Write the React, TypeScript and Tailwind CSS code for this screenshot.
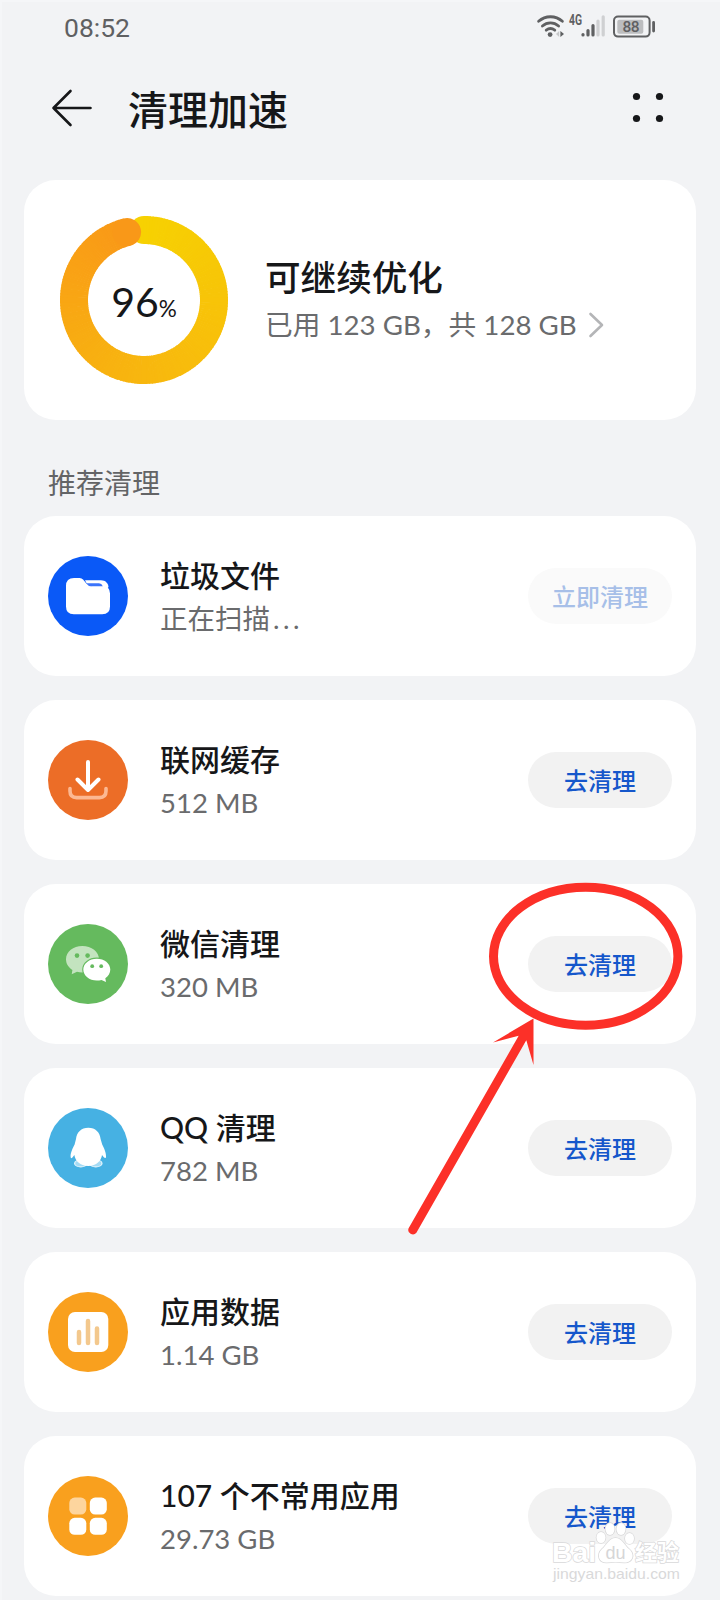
import React from "react";

interface CleanItem {
    title: string;
    detail: string;
    pending?: boolean;
    action: string;
    disabled?: boolean;
    background: string;
    icon: React.ReactNode;
}

const RING_START = [247, 209, 2];
const RING_MIDDLE = [248, 184, 14];
const RING_END = [249, 152, 24];

const FolderIcon = () => (
    <svg viewBox="0 0 80 80" className="w-20 h-20">
        <path
            d="M37 24.2H53C57.5 24.2 60 27 60.5 31L58 34L40 30Z"
            fill="#fff"
        />
        <path
            d="M26 22H31.5Q33.8 22 35.3 23.7L38.3 27.6Q40.2 30.2 43 30.2H54.5Q62 30.2 62 37.5V50.5Q62 58.3 54.2 58.3H25.8Q18 58.3 18 50.5V30Q18 22 26 22Z"
            fill="#fff"
        />
        <path
            d="M38.2 27.2H51Q53.6 27.2 54.8 30.2H43Q40.2 30.2 38.2 27.2Z"
            fill="#3b74fb"
        />
    </svg>
);

const DownloadIcon = () => (
    <svg
        viewBox="0 0 80 80"
        className="w-20 h-20"
        fill="none"
        strokeLinecap="round"
        strokeLinejoin="round">
        <path
            d="M22 48.5V51Q22 57.6 28.6 57.6H51.4Q58 57.6 58 51V48.5"
            stroke="#fcb892"
            strokeWidth="3.6"
        />
        <path
            d="M40 22V50M29.5 39.5L40 50L50.5 39.5"
            stroke="#fff"
            strokeWidth="4"
        />
    </svg>
);

const WechatIcon = () => (
    <svg viewBox="0 0 80 80" className="w-20 h-20">
        <path
            d="M34.3 22C43.5 22 51 27.9 51 35.3S43.5 48.6 34.3 48.6C32.4 48.6 30.6 48.3 29 47.8L23.7 50.3L24.4 45.9C20.4 43.5 18 39.7 18 35.3C18 27.9 25.2 22 34.3 22Z"
            fill="#c3e4bf"
        />
        <path
            d="M48.8 34.7C56.3 34.7 62.3 39.4 62.3 45.6C62.3 49.2 60.3 52.4 57.3 54.3L58 58L53.5 56C52 56.4 50.5 56.6 48.8 56.6C41.3 56.6 35.3 51.7 35.3 45.6S41.3 34.7 48.8 34.7Z"
            fill="#fff"
            stroke="#65ba5e"
            strokeWidth="2.2"
            paintOrder="stroke"
        />
        <g fill="#65ba5e">
            <circle cx="29" cy="31.6" r="2.3" />
            <circle cx="39.6" cy="31.6" r="2.3" />
            <circle cx="44.2" cy="42.2" r="1.9" />
            <circle cx="53.2" cy="42.2" r="1.9" />
        </g>
    </svg>
);

const QQIcon = () => (
    <svg viewBox="0 0 80 80" className="w-20 h-20">
        <g fill="#a5dbf4" stroke="#e9f7fd" strokeWidth="1.2">
            <ellipse cx="32.8" cy="55.4" rx="6.2" ry="3.4" />
            <ellipse cx="47.8" cy="55.4" rx="6.2" ry="3.4" />
        </g>
        <path
            d="M40.3 19.7C47.5 19.7 52 24.5 52.6 31L54.2 36.5C56.2 40 58.3 45.5 58 48.5C57.9 50.6 57 50.6 55.2 48.6L54 47C53.4 52.5 48.5 58 40.3 58S27 52.5 26.4 47L25.2 48.6C23.6 50.7 22.7 50.6 22.6 48.5C22.4 45.5 24.6 40 26.6 36.5L28 31C28.6 24.5 33.2 19.7 40.3 19.7Z"
            fill="#fff"
        />
    </svg>
);

const ChartIcon = () => (
    <svg viewBox="0 0 80 80" className="w-20 h-20">
        <rect x="20" y="20" width="40.3" height="40" rx="7" fill="#fff" />
        <path
            d="M31 40V51M40 29V51M49 36.5V51"
            stroke="#f3c88d"
            strokeWidth="4.5"
            strokeLinecap="round"
        />
    </svg>
);

const AppsIcon = () => (
    <svg viewBox="0 0 80 80" className="w-20 h-20" fill="#fff">
        <rect x="21.3" y="21.6" width="17" height="17" rx="5.4" fill="#fdd59e" />
        <rect x="41.8" y="21.6" width="17" height="17" rx="5.4" />
        <rect x="21.3" y="41.8" width="17" height="17" rx="5.4" />
        <rect x="41.8" y="41.8" width="17" height="17" rx="5.4" />
    </svg>
);

const items: CleanItem[] = [
    {
        title: "垃圾文件",
        detail: "正在扫描",
        pending: true,
        action: "立即清理",
        disabled: true,
        background: "bg-[#0a59f7]",
        icon: <FolderIcon />
    },
    {
        title: "联网缓存",
        detail: "512 MB",
        action: "去清理",
        background: "bg-[#ec6d27]",
        icon: <DownloadIcon />
    },
    {
        title: "微信清理",
        detail: "320 MB",
        action: "去清理",
        background: "bg-[#65ba5e]",
        icon: <WechatIcon />
    },
    {
        title: "QQ 清理",
        detail: "782 MB",
        action: "去清理",
        background: "bg-[#46b1e3]",
        icon: <QQIcon />
    },
    {
        title: "应用数据",
        detail: "1.14 GB",
        action: "去清理",
        background: "bg-[#f9a01e]",
        icon: <ChartIcon />
    },
    {
        title: "107 个不常用应用",
        detail: "29.73 GB",
        action: "去清理",
        background: "bg-[#f9a01e]",
        icon: <AppsIcon />
    }
];

const StatusBar = () => (
    <div className="h-[54px] px-16 flex items-center justify-between text-[#5f6062]">
        <span className="pt-0.5 font-['Roboto',sans-serif] text-[26.5px] leading-8">
            08:52
        </span>
        <svg
            viewBox="0 0 120 34"
            className="w-[120px] h-[34px] overflow-visible">
            <g transform="translate(0 4)">
                <g
                    fill="none"
                    stroke="currentColor"
                    strokeWidth="2.8"
                    strokeLinecap="round">
                    <path d="M2.6 7.3C9.5 1.2 19.5 1.2 26.4 7.3" />
                    <path d="M6.4 12C11.2 7.9 17.8 7.9 22.6 12" />
                    <path d="M10.2 16.2C12.8 14.2 16.2 14.2 18.8 16.2" />
                </g>
                <circle cx="14.1" cy="20.6" r="2.4" fill="currentColor" />
                <path d="M23.2 17V23L20 20Z" fill="#c6c7c9" />
                <path d="M24.4 17V23L28 20Z" fill="currentColor" />
                <text
                    x="33"
                    y="11"
                    fill="currentColor"
                    textLength="13"
                    lengthAdjust="spacingAndGlyphs"
                    className="font-['Roboto',sans-serif] font-bold text-[14px]">
                    4G
                </text>
                <g strokeWidth="3.2" strokeLinecap="round">
                    <path
                        d="M47 20.6V21M52 16.5V21M57 11.5V21"
                        stroke="currentColor"
                    />
                    <path d="M62 7V21M67.2 2.8V21" stroke="#cfd0d2" />
                </g>
                <rect
                    x="78"
                    y="2.6"
                    width="35.6"
                    height="20"
                    rx="4"
                    fill="none"
                    stroke="currentColor"
                    strokeWidth="2"
                />
                <rect
                    x="81.3"
                    y="5.8"
                    width="26"
                    height="14"
                    rx="2"
                    fill="#bcbdbf"
                />
                <path
                    d="M117.6 8.5V17"
                    stroke="currentColor"
                    strokeWidth="2.8"
                    strokeLinecap="round"
                />
                <text
                    x="86.5"
                    y="18.4"
                    fill="currentColor"
                    textLength="17"
                    className="font-['Roboto',sans-serif] font-medium text-[15.5px]">
                    88
                </text>
            </g>
        </svg>
    </div>
);

const Header = () => (
    <header className="h-[126px] pl-[50px] pr-[54px] flex items-start text-[#161719]">
        <svg viewBox="0 0 44 44" className="w-11 h-11 mt-8" fill="none">
            <path
                d="M20.5 5L3.5 22L20.5 39M3.5 22H40.5"
                stroke="currentColor"
                strokeWidth="2.6"
                strokeLinecap="round"
                strokeLinejoin="round"
            />
        </svg>
        <h1 className="ml-[34px] mt-[27px] text-[40px] leading-[58px] font-medium">
            清理加速
        </h1>
        <svg
            viewBox="0 0 36 36"
            className="ml-auto mt-[35px] w-9 h-9"
            fill="currentColor">
            <circle cx="6.5" cy="7.5" r="3.6" />
            <circle cx="29.5" cy="7.5" r="3.6" />
            <circle cx="6.5" cy="29.5" r="3.6" />
            <circle cx="29.5" cy="29.5" r="3.6" />
        </svg>
    </header>
);

const ringPoint = (degrees: number) => {
    const angle = (degrees * Math.PI) / 180;
    return `${84 + 70 * Math.sin(angle)} ${84 - 70 * Math.cos(angle)}`;
};

const ringColor = (degrees: number) => {
    const t = degrees / 346;
    const [from, to] =
        t < 0.5 ? [RING_START, RING_MIDDLE] : [RING_MIDDLE, RING_END];
    const k = t < 0.5 ? t * 2 : t * 2 - 1;
    return `rgb(${from.map((c, i) => Math.round(c + (to[i] - c) * k)).join(",")})`;
};

const UsageRing = () => {
    const steps = Array.from({length: 173}, (_, i) => i * 2);
    return (
        <div className="grid place-items-center w-[168px] h-[168px]">
            <svg
                viewBox="0 0 168 168"
                className="col-start-1 row-start-1 w-[168px] h-[168px]"
                fill="none"
                strokeWidth="28">
                <circle cx="84" cy="14" r="14" fill={ringColor(0)} strokeWidth="0" />
                {steps.map((d) => (
                    <path
                        key={d}
                        d={`M${ringPoint(d)}A70 70 0 0 1 ${ringPoint(Math.min(d + 2.6, 346))}`}
                        stroke={ringColor(d)}
                    />
                ))}
                <path
                    d={`M${ringPoint(345.5)}L${ringPoint(346)}`}
                    stroke={ringColor(346)}
                    strokeLinecap="round"
                />
            </svg>
            <div className="col-start-1 row-start-1 pt-0.5 flex items-baseline text-[#161719] font-['Lato',sans-serif] leading-none">
                <span className="text-[41px]">96</span>
                <span className="text-[22.5px]">%</span>
            </div>
        </div>
    );
};

const UsageCard = () => (
    <section className="h-60 pl-9 rounded-[32px] bg-white flex items-center">
        <UsageRing />
        <div className="ml-[37px] -mt-0.5 flex flex-col">
            <div className="text-[35.6px] leading-[52px] font-medium text-[#161719]">
                可继续优化
            </div>
            <div className="flex items-center gap-[11px] text-[27.7px] leading-[42px] text-[#6a6b6d]">
                <span className="whitespace-nowrap">已用 123 GB，共 128 GB</span>
                <svg viewBox="0 0 16 28" className="w-4 h-7" fill="none">
                    <path
                        d="M2.5 3L14 14L2.5 25"
                        stroke="#b4b5b7"
                        strokeWidth="2.6"
                        strokeLinecap="round"
                        strokeLinejoin="round"
                    />
                </svg>
            </div>
        </div>
    </section>
);

const CleanCard = ({
    title,
    detail,
    pending = false,
    action,
    disabled = false,
    background,
    icon
}: CleanItem) => (
    <li className="h-40 px-6 rounded-[32px] bg-white flex items-center">
        <div className={`w-20 h-20 rounded-full shrink-0 ${background}`}>
            {icon}
        </div>
        <div className="ml-8 pt-0.5 flex flex-col whitespace-nowrap">
            <div className="text-[30px] leading-[44px] font-medium text-[#161719]">
                {title}
            </div>
            <div className="text-[27.5px] leading-[44px] text-[#6a6b6d]">
                {detail}
                {pending && <span className="ml-[3px] tracking-[3.5px]">...</span>}
            </div>
        </div>
        <button
            type="button"
            disabled={disabled}
            className={`ml-auto w-36 h-14 pt-0.5 rounded-full text-[24px] leading-8 font-medium ${disabled ? "bg-[#fafafa] text-[#a7bfe8]" : "bg-[#f2f2f2] text-[#1557cb]"}`}>
            {action}
        </button>
    </li>
);

// Hand-drawn highlight over the WeChat row
const Annotation = () => (
    <svg
        viewBox="0 0 300 360"
        className="absolute left-[400px] top-[880px] w-[300px] h-[360px] pointer-events-none"
        fill="none">
        <ellipse
            cx="185.7"
            cy="76.2"
            rx="92.2"
            ry="69"
            stroke="#fc3028"
            strokeWidth="9"
        />
        <path
            d="M133.5 138.5L93 162.5L118.7 155.7L8.6 348.2A4.6 4.6 0 0 0 16.4 352.8L126.3 160.3L133.5 185Z"
            fill="#fc3028"
        />
    </svg>
);

const Watermark = () => (
    <svg
        viewBox="0 0 140 70"
        className="absolute left-[548px] top-[1520px] w-[140px] h-[70px] pointer-events-none"
        fill="#fff"
        stroke="#d9d9da"
        strokeWidth="1.5"
        paintOrder="stroke">
        <text
            x="4"
            y="41.5"
            textLength="44"
            lengthAdjust="spacingAndGlyphs"
            className="font-['Liberation_Sans',sans-serif] font-bold text-[28px]">
            Bai
        </text>
        <ellipse cx="53" cy="17.5" rx="4.5" ry="5.5" />
        <ellipse cx="62" cy="9" rx="4.5" ry="6" />
        <ellipse cx="73" cy="9" rx="4.5" ry="6" />
        <ellipse cx="81.5" cy="18.5" rx="4.5" ry="5.5" />
        <path d="M67.5 18C74 18 76 25 81 29C88 35 84 43 76 42.5C71 42 64 42 59 42.5C51 43 48 35 54 29C59 25 61 18 67.5 18Z" />
        <text
            x="57.5"
            y="39"
            fill="#d6d6d7"
            stroke="none"
            className="font-['Liberation_Sans',sans-serif] text-[18px]">
            du
        </text>
        <text
            x="87"
            y="40"
            textLength="44"
            className="font-['Noto_Sans_CJK_SC',sans-serif] font-bold text-[22px]">
            经验
        </text>
        <text
            x="5"
            y="59"
            fill="#d9d9da"
            stroke="none"
            textLength="127"
            lengthAdjust="spacingAndGlyphs"
            className="font-['Liberation_Sans',sans-serif] text-[15px]">
            jingyan.baidu.com
        </text>
    </svg>
);

const App = () => (
    <div className="relative w-[720px] h-[1600px] overflow-hidden bg-[#f2f3f5] shadow-[inset_2px_2px_0_#f5f6f8] font-['Lato','Noto_Sans_CJK_SC',sans-serif]">
        <StatusBar />
        <Header />
        <main className="px-6">
            <UsageCard />
            <h2 className="h-24 pl-6 pt-[42px] text-[28px] leading-[42px] text-[#636466]">
                推荐清理
            </h2>
            <ul className="flex flex-col gap-6">
                {items.map((item) => (
                    <CleanCard key={item.title} {...item} />
                ))}
            </ul>
        </main>
        <Annotation />
        <Watermark />
    </div>
);

export default App;
